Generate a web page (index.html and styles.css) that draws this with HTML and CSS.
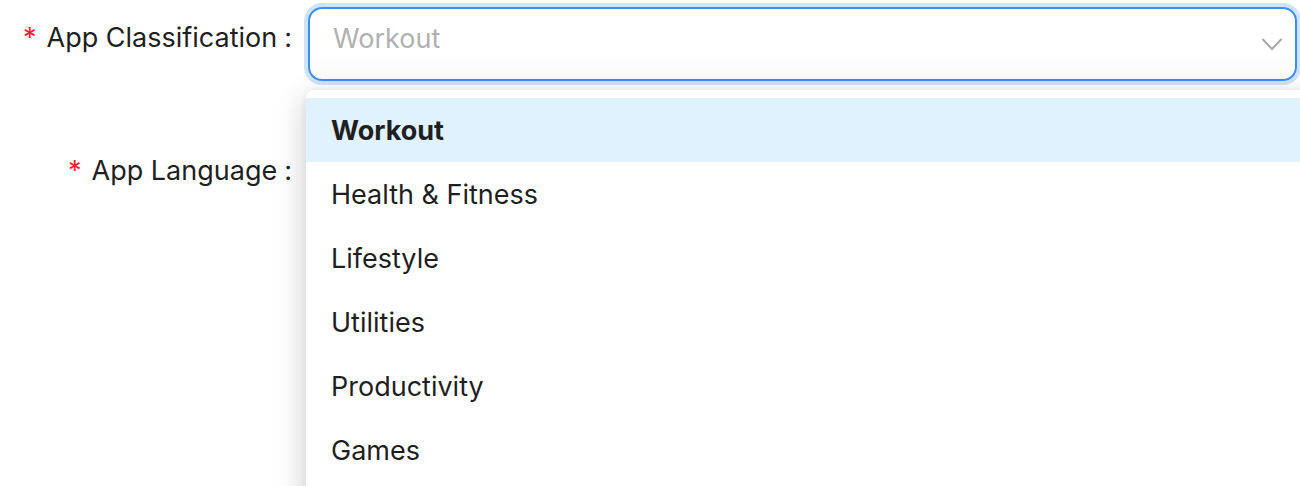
FILE: index.html
```html
<!DOCTYPE html>
<html>
<head>
<meta charset="utf-8">
<link rel="stylesheet" href="styles.css">
</head>
<body>
<div class="form">
  <div class="row row-first">
    <div class="label"><span class="req">*</span>App Classification<span class="colon">:</span></div>
    <div class="control">
      <div class="select">
        <span class="placeholder">Workout</span>
        <svg class="arrow" width="22" height="14" viewBox="0 0 22 14"><path d="M1.5 2 L11 12 L20.5 2" fill="none" stroke="#a8a8a8" stroke-width="2"/></svg>
      </div>
    </div>
  </div>
  <div class="row row-second">
    <div class="label"><span class="req">*</span>App Language<span class="colon">:</span></div>
    <div class="control"></div>
  </div>
</div>
<div class="dropdown">
  <div class="option active">Workout</div>
  <div class="option">Health &amp; Fitness</div>
  <div class="option">Lifestyle</div>
  <div class="option">Utilities</div>
  <div class="option">Productivity</div>
  <div class="option">Games</div>
</div>
</body>
</html>
```
FILE: styles.css
```css
html, body {
  margin: 0;
  padding: 0;
  background: #fff;
  height: 486px;
  overflow: hidden;
}
body {
  font-family: Inter, "Noto Sans", sans-serif;
  color: #1f1f1f;
  position: relative;
}
.form {
  padding-top: 7px;
}
.row {
  display: grid;
  grid-template-columns: 292px 1fr;
  column-gap: 16px;
  align-items: center;
}
.row-first {
  height: 74px;
}
.row-first .label {
  align-self: start;
  margin-top: 15px;
}
.row-second {
  margin-top: 53px;
  height: 74px;
}
.label {
  text-align: right;
  font-size: 27px;
  line-height: 32px;
  white-space: nowrap;
}
.req {
  color: #f5222d;
  margin-right: 10px;
}
.colon {
  margin-left: 7px;
}
.control {
  padding-right: 3px;
}
.select {
  box-sizing: border-box;
  height: 74px;
  border: 2px solid #3a8ef0;
  border-radius: 14px;
  box-shadow: 0 0 0 4px #cfe3fd;
  display: flex;
  align-items: center;
  padding: 0 12px 0 23px;
  background: linear-gradient(#fff 60%, #fafafa);
}
.placeholder {
  flex: 1;
  font-size: 27px;
  color: #b0b0b0;
  margin-top: -12px;
}
.dropdown {
  position: absolute;
  left: 306px;
  top: 90px;
  right: -20px;
  bottom: -20px;
  background: #fff;
  padding-top: 8px;
  box-shadow: -4px 6px 28px rgba(0,0,0,0.16), 0 2px 8px rgba(0,0,0,0.06);
  border-radius: 8px;
}
.option {
  height: 64px;
  display: flex;
  align-items: center;
  padding-left: 25px;
  font-size: 27px;
  color: #1f1f1f;
}
.option.active {
  background: #e0f2fd;
  font-weight: 700;
}
```
